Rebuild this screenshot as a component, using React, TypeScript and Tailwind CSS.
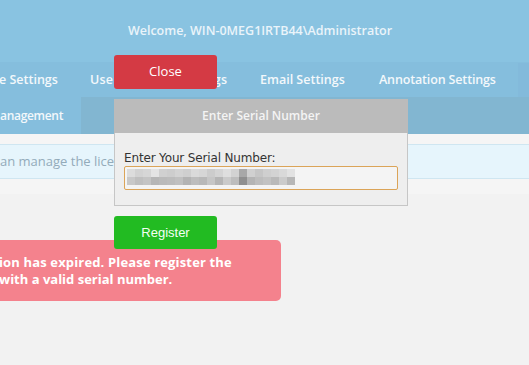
import React from "react";

const row1 = ["#dcdcdc","#d2d2d2","#d6d6d6","#e4e4e4","#d0d0d0","#cdcdcd","#d3d3d3","#cfcfcf","#dadada","#d6d6d6","#cccccc","#d4d4d4","#dedede","#d2d2d2","#a8a8a8","#d0d0d0","#c6c6c6","#cfcfcf","#d3d3d3","#d9d9d9","#e2e2e2"];
const row2 = ["#c8c8c8","#bfbfbf","#c4c4c4","#b6b6b6","#bababa","#bcbcbc","#c0c0c0","#b3b3b3","#bdbdbd","#b8b8b8","#c6c6c6","#b5b5b5","#cacaca","#bdbdbd","#8f8f8f","#b4b4b4","#bdbdbd","#c2c2c2","#b9b9b9","#cbcbcb","#b7b7b7"];

export default function App() {
  return (
    <div className="relative w-[529px] h-[365px] overflow-hidden bg-[#f2f2f2] font-['Open_Sans',sans-serif]">
      <div className="h-[62px] bg-[#89c3e1] flex items-center justify-center pr-[9px] text-[12.5px] font-semibold text-[#eaf4fa]">
        Welcome, WIN-0MEG1IRTB44\Administrator
      </div>
      <div className="h-[35px] bg-[#85bedd] flex items-center text-[12.5px] font-semibold text-[#f3f8fb] whitespace-nowrap pt-[1px]">
        <span className="w-[91px] -ml-[1px]">e Settings</span>
        <span className="w-[170px] tracking-[0.25px]">User Account Settings</span>
        <span className="w-[119px]">Email Settings</span>
        <span className="w-[139px] tracking-[-0.15px]">Annotation Settings</span>
        <div className="flex-1 h-full bg-[#83badb]"></div>
      </div>
      <div className="h-[37px] flex text-[12px] font-semibold text-[#f3f8fb]">
        <div className="w-[81px] bg-[#85bedd] flex items-center tracking-[-0.3px]">anagement</div>
        <div className="flex-1 bg-[#82b6d1]"></div>
      </div>
      <div className="h-[10px] bg-[#f5f5f5]"></div>
      <div className="h-[35px] bg-[#e6f5fc] border-y border-[#cfe6f1] flex items-center text-[13px] text-[#93abba] whitespace-nowrap">
        an manage the license of the product here.
      </div>
      <div className="h-[15px] bg-[#f5f5f5]"></div>
      <div className="mt-[46px] w-[281px] h-[61px] bg-[#f4828d] rounded-r-[5px] flex flex-col justify-center text-[13px] font-bold text-white leading-[17px] whitespace-nowrap">
        <div className="-ml-[1px] tracking-[0.15px]">ion has expired. Please register the</div>
        <div className="-ml-[1px]">with a valid serial number.</div>
      </div>

      <div className="absolute left-[114px] top-[55px] w-[294px] flex flex-col">
        <button className="w-[103px] h-[34px] rounded-[3px] bg-[#d43a44] text-white text-[13px] font-['Open_Sans',sans-serif] flex items-center justify-center">
          Close
        </button>
        <div className="mt-[10px] w-[294px]">
          <div className="h-[34px] bg-[#bbbbbb] flex items-center justify-center text-[12px] font-semibold text-[#f4f4f4]">
            Enter Serial Number
          </div>
          <div className="h-[73px] bg-[#eeeeee] border-x border-b border-[#c6c6c6] px-[9px] pt-[18px]">
            <div className="text-[12px] leading-[15px] text-[#333333] font-['DejaVu_Sans',sans-serif] tracking-[-0.15px]">Enter Your Serial Number:</div>
            <div className="h-[24px] border border-[#dba458] rounded-[2px] bg-[#f4f4f4] pl-[2px] pt-[2px]">
              <div className="flex">
                {row1.map((c, i) => (
                  <div key={i} className="w-[8px] h-[8px]" style={{ backgroundColor: c }}></div>
                ))}
              </div>
              <div className="flex">
                {row2.map((c, i) => (
                  <div key={i} className="w-[8px] h-[8px]" style={{ backgroundColor: c }}></div>
                ))}
              </div>
            </div>
          </div>
        </div>
        <button className="mt-[10px] w-[103px] h-[33px] rounded-[3px] bg-[#22bb22] text-[#f4fff4] text-[13px] font-['Liberation_Sans',sans-serif] flex items-center justify-center">
          Register
        </button>
      </div>
    </div>
  );
}
